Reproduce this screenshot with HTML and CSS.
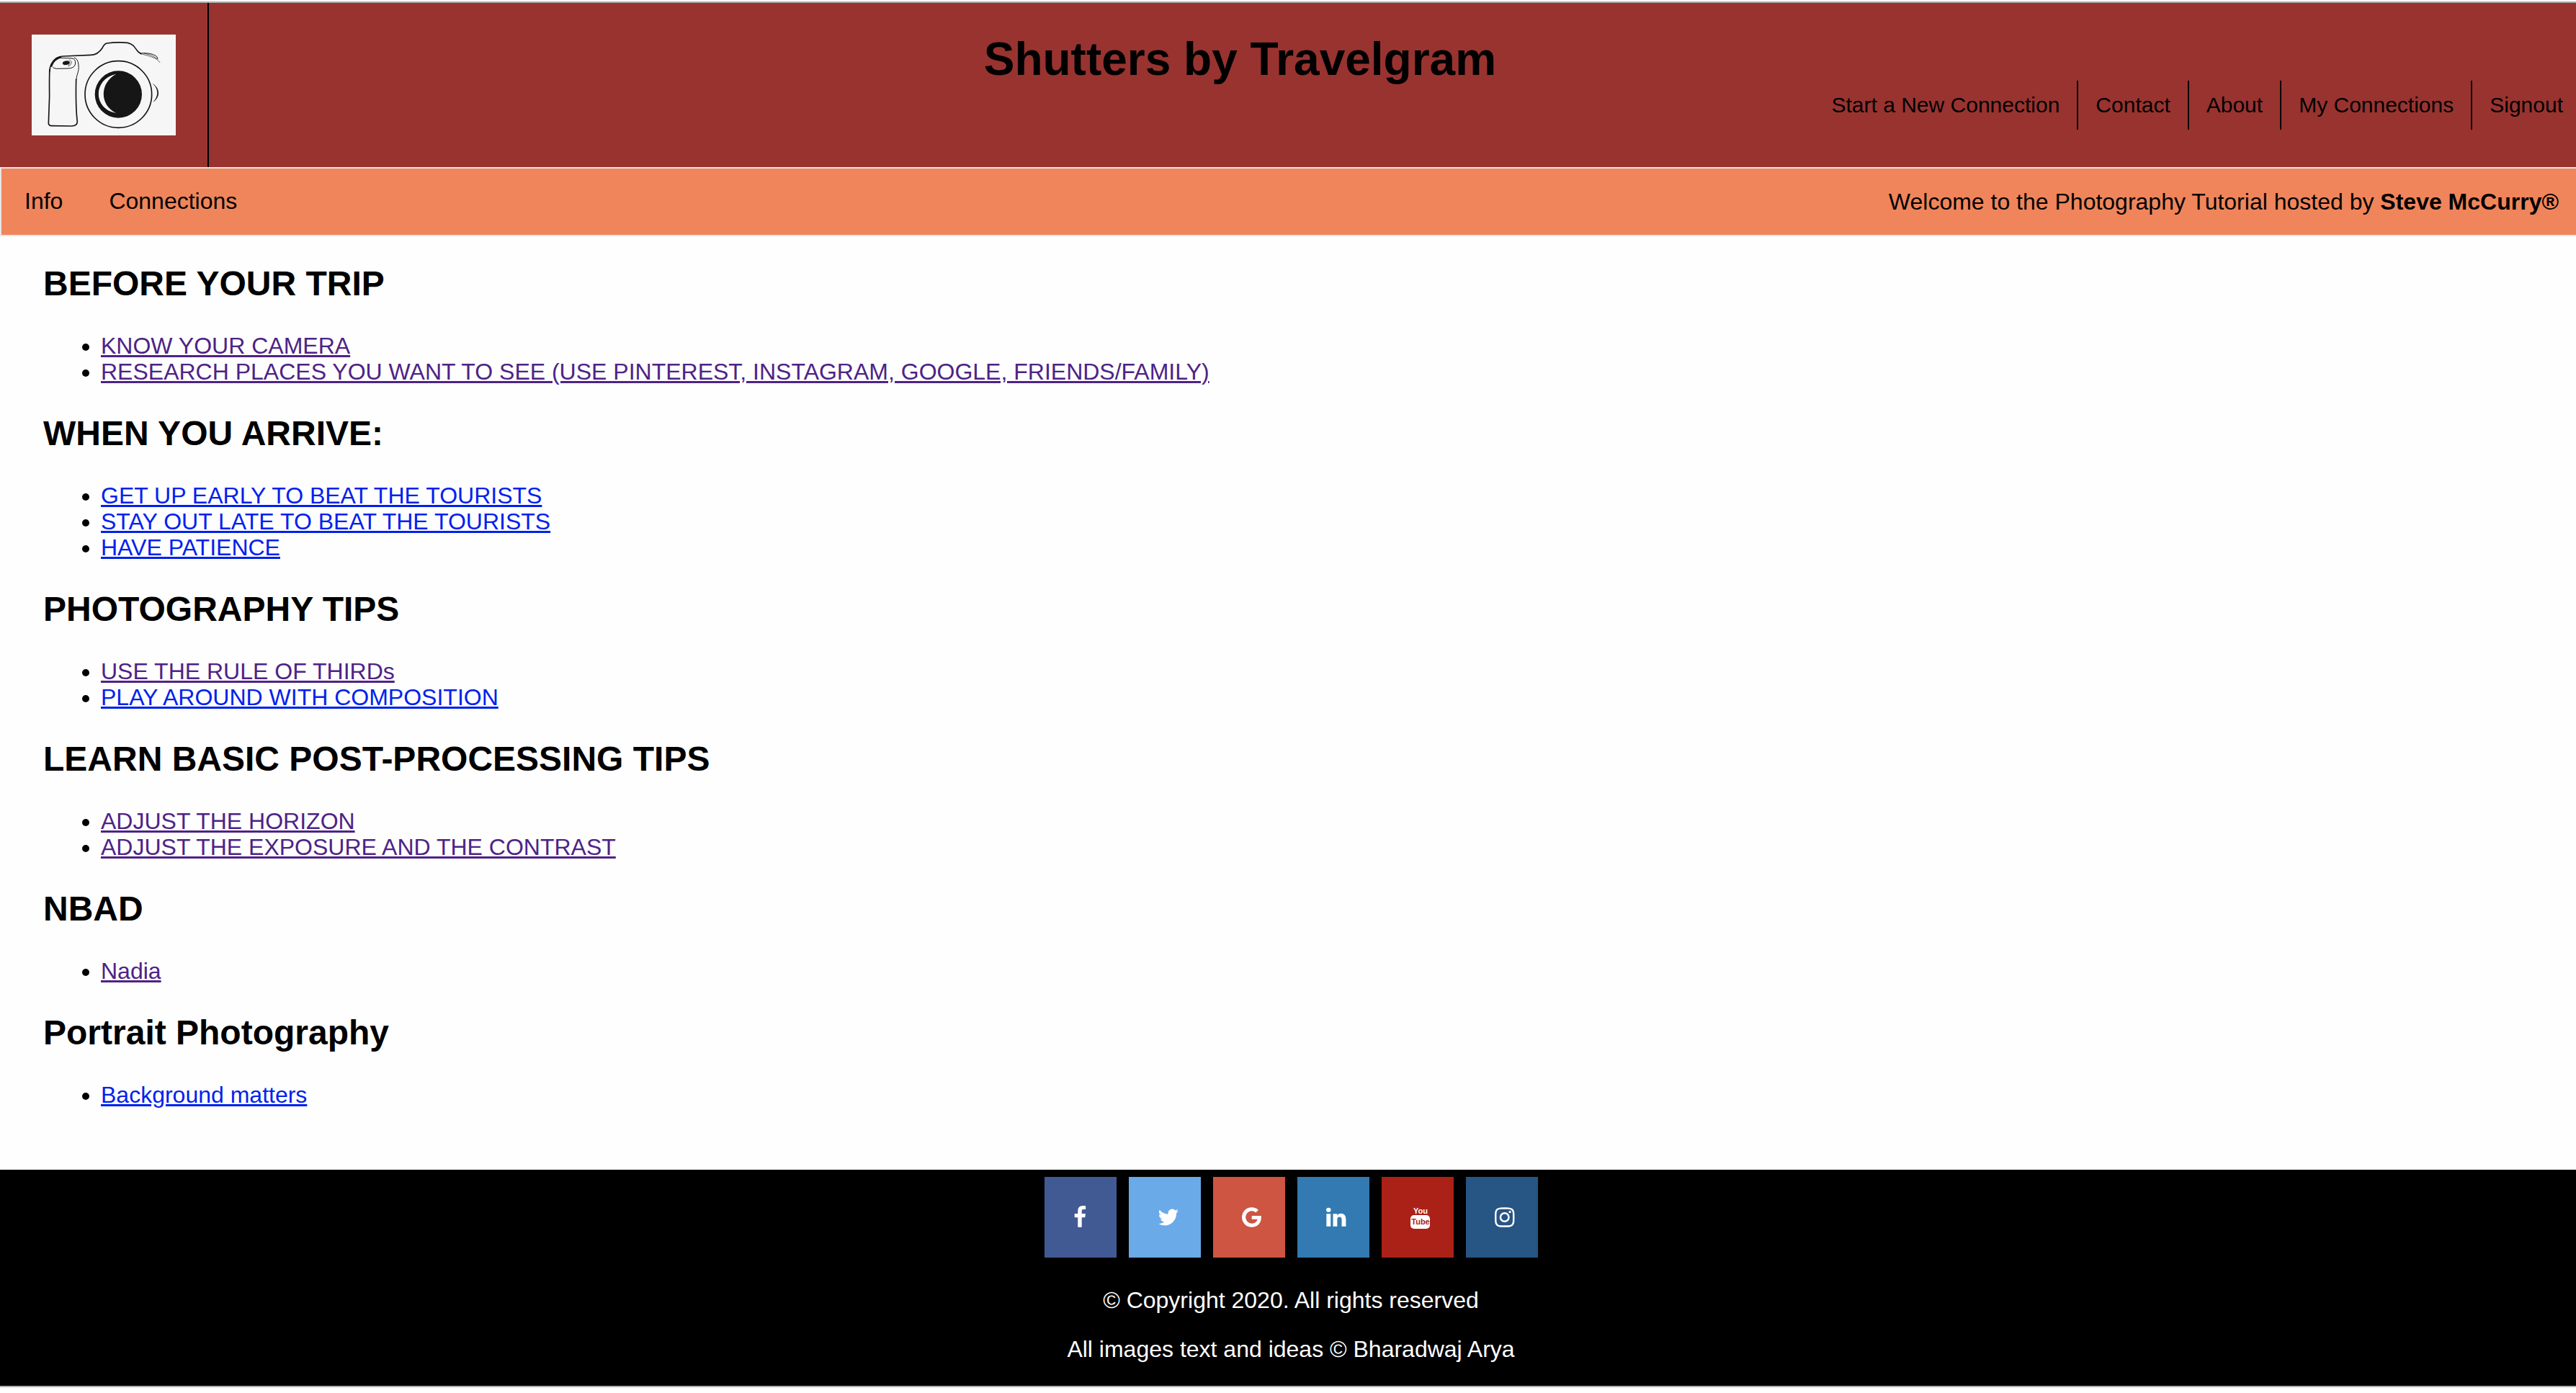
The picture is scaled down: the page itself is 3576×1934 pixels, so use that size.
FILE: index.html
```html
<!DOCTYPE html>
<html lang="en">
<head>
<meta charset="utf-8">
<title>Shutters by Travelgram</title>
<link rel="stylesheet" href="styles.css">
</head>
<body>
<header class="header">
  <a class="logo" href="#" aria-label="Home">
    <svg class="logo-image" viewBox="132 144 600 420" fill="none" stroke="#161616" stroke-linecap="round" aria-hidden="true">
      <path stroke-width="5" d="M206 300Q208 262 232 244Q244 235 268 234L380 229C400 228 416 215 426 200Q434 183 445 180Q490 174 530 178C560 184 562 202 574 214Q580 220 588 224"/>
      <path stroke-width="7" d="M214 275Q222 248 252 238"/>
      <path stroke-width="5" d="M207 290Q205 320 206 400L202 515Q204 524 214 524L298 525Q322 524 322 506C316 460 316 380 317 330"/>
      <path stroke-width="3" d="M317 335C320 305 330 300 327 270Q325 244 310 241"/>
      <path stroke-width="3" d="M244 241L300 243Q315 246 314 264Q312 284 285 285L235 286Q222 285 219 279"/>
      <path stroke-width="2" d="M290 249Q300 254 297 264Q294 274 284 276M288 254Q294 262 286 271"/>
      <ellipse cx="275" cy="262" rx="14" ry="8" fill="#161616" stroke-width="1" transform="rotate(-8 275 262)"/>
      <path stroke-width="3" d="M584 222Q625 218 648 232Q658 238 657 245"/>
      <path stroke-width="2" d="M588 224C610 232 650 236 666 260M600 222Q630 226 655 244"/>
      <circle cx="493" cy="393" r="139" stroke-width="5"/>
      <circle cx="493" cy="393" r="98" fill="#161616" stroke="none"/>
      <path fill="#f6f6f6" stroke="none" d="M484 308C386 328 386 454 484 471C414 438 414 345 484 308Z"/>
      <path fill="#161616" stroke="none" d="M638 350Q658 364 660 387Q658 410 640 423Q654 406 655 387Q654 366 638 350Z"/>
      <path stroke-width="2" d="M638 350Q658 364 659 387Q658 410 640 423"/>
    </svg>
  </a>
  <div class="header-main">
    <h1 class="title">Shutters by Travelgram</h1>
    <nav class="site-nav" aria-label="Main">
      <a href="#">Start a New Connection</a>
      <a href="#">Contact</a>
      <a href="#">About</a>
      <a href="#">My Connections</a>
      <a href="#">Signout</a>
    </nav>
  </div>
</header>
<div class="subnav">
  <nav class="subnav-links" aria-label="Section">
    <a href="#">Info</a>
    <a href="#">Connections</a>
  </nav>
  <p class="welcome">Welcome to the Photography Tutorial hosted by <strong>Steve McCurry®</strong></p>
</div>
<main class="content">
  <h2>BEFORE YOUR TRIP</h2>
  <ul>
    <li><a class="seen" href="#">KNOW YOUR CAMERA</a></li>
    <li><a class="seen" href="#">RESEARCH PLACES YOU WANT TO SEE (USE PINTEREST, INSTAGRAM, GOOGLE, FRIENDS/FAMILY)</a></li>
  </ul>
  <h2>WHEN YOU ARRIVE:</h2>
  <ul>
    <li><a href="#">GET UP EARLY TO BEAT THE TOURISTS</a></li>
    <li><a href="#">STAY OUT LATE TO BEAT THE TOURISTS</a></li>
    <li><a href="#">HAVE PATIENCE</a></li>
  </ul>
  <h2>PHOTOGRAPHY TIPS</h2>
  <ul>
    <li><a class="seen" href="#">USE THE RULE OF THIRDs</a></li>
    <li><a href="#">PLAY AROUND WITH COMPOSITION</a></li>
  </ul>
  <h2>LEARN BASIC POST-PROCESSING TIPS</h2>
  <ul>
    <li><a class="seen" href="#">ADJUST THE HORIZON</a></li>
    <li><a class="seen" href="#">ADJUST THE EXPOSURE AND THE CONTRAST</a></li>
  </ul>
  <h2>NBAD</h2>
  <ul>
    <li><a class="seen" href="#">Nadia</a></li>
  </ul>
  <h2>Portrait Photography</h2>
  <ul>
    <li><a href="#">Background matters</a></li>
  </ul>
</main>
<footer class="footer">
  <div class="social">
    <a class="facebook" href="#" aria-label="Facebook"><svg viewBox="384 0 1792 1792"><path d="M1343 12v264h-157q-86 0-116 36t-30 108v189h293l-39 296h-254v759h-306v-759h-255v-296h255v-218q0-186 104-288.500t277-102.500q147 0 228 12z"/></svg></a>
    <a class="twitter" href="#" aria-label="Twitter"><svg viewBox="64 0 1792 1792"><path d="M1684 408q-67 98-162 167 1 14 1 42 0 130-38 259.500t-115.500 248.500-184.500 210.500-258 146-323 54.500q-271 0-496-145 35 4 78 4 225 0 401-138-105-2-188-64.500t-114-159.500q33 5 61 5 43 0 85-11-112-23-185.500-111.500t-73.500-205.500v-4q68 38 146 41-66-44-105-115t-39-154q0-88 44-163 121 149 294.500 238.500t371.500 99.500q-8-38-8-74 0-134 94.500-228.500t228.500-94.500q140 0 236 102 109-21 205-78-37 115-142 178 93-10 186-50z"/></svg></a>
    <a class="google" href="#" aria-label="Google"><svg viewBox="128 0 1792 1792"><path d="M896 786h725q12 67 12 128 0 217-91 387.500t-259.500 266.500-386.500 96q-157 0-299-60.500t-245-163.500-163.500-245-60.500-299 60.500-299 163.500-245 245-163.500 299-60.500q300 0 515 201l-209 201q-123-119-306-119-129 0-238.500 65t-173.500 176.500-64 243.500 64 243.500 173.500 176.500 238.500 65q87 0 160-24t120-60 82-82 51.500-87 22.500-78h-436v-264z"/></svg></a>
    <a class="linkedin" href="#" aria-label="LinkedIn"><svg viewBox="128 0 1792 1792"><path d="M477 625v991h-330v-991h330zm21-306q1 73-50.500 122t-135.500 49h-2q-82 0-132-49t-50-122q0-74 51.500-122.500t134.500-48.500 133 48.500 51 122.500zm1166 729v568h-329v-530q0-105-40.500-164.500t-126.500-59.500q-63 0-105.500 34.500t-63.500 85.500q-11 30-11 81v553h-329q2-399 2-647t-1-296l-1-48h329v144h-2q20-32 41-56t56.500-52 87-43.500 114.500-15.500q171 0 275 113.500t104 332.500z"/></svg></a>
    <a class="youtube" href="#" aria-label="YouTube"><svg viewBox="0 0 32 32"><text x="14" y="11">You</text><rect y="13" width="27" height="19" rx="5"/><text class="tube" x="14" y="26">Tube</text></svg></a>
    <a class="instagram" href="#" aria-label="Instagram"><svg viewBox="128 0 1792 1792"><path d="M1152 896q0-106-75-181t-181-75-181 75-75 181 75 181 181 75 181-75 75-181zm138 0q0 164-115 279t-279 115-279-115-115-279 115-279 279-115 279 115 115 279zm108-410q0 38-27 65t-65 27-65-27-27-65 27-65 65-27 65 27 27 65zm-502-220q-7 0-76.500-.5t-105.500 0-96.500 3-103 10-71.500 18.500q-50 20-88 58t-58 88q-11 29-18.500 71.500t-10 103-3 96.500 0 105.500.5 76.500-.5 76.500 0 105.500 3 96.500 10 103 18.500 71.500q20 50 58 88t88 58q29 11 71.500 18.500t103 10 96.500 3 105.500 0 76.500-.5 76.500.5 105.500 0 96.500-3 103-10 71.500-18.500q50-20 88-58t58-88q11-29 18.500-71.500t10-103 3-96.500 0-105.500-.5-76.500.5-76.500 0-105.500-3-96.500-10-103-18.500-71.500q-20-50-58-88t-88-58q-29-11-71.500-18.500t-103-10-96.500-3-105.500 0-76.500.5zm768 630q0 229-5 317-10 208-124 322t-322 124q-88 5-317 5t-317-5q-208-10-322-124t-124-322q-5-88-5-317t5-317q10-208 124-322t322-124q88-5 317-5t317 5q208 10 322 124t124 322q5 88 5 317z"/></svg></a>
  </div>
  <p>© Copyright 2020. All rights reserved</p>
  <p>All images text and ideas © Bharadwaj Arya</p>
</footer>
</body>
</html>
```
FILE: styles.css
```css
* {
  box-sizing: border-box;
}

body {
  margin: 0;
  padding-top: 2px;
  background: #fefefe;
  color: #000;
  font-family: "Liberation Sans", Arial, sans-serif;
  font-size: 32px;
  line-height: 36px;
}

/* Header */
.header {
  display: flex;
  border-top: 2px solid #b0b0b0;
  background: #993330;
}

.logo {
  display: flex;
  padding: 44px;
  border-right: 2px solid #000;
}

.logo-image {
  width: 200px;
  height: 140px;
  background: #f6f6f6;
}

.header-main {
  flex: 1;
  padding-top: 48px;
}

.title {
  width: 87%;
  margin: 0;
  padding-left: 4px;
  font-size: 64px;
  line-height: 60px;
  text-align: center;
}

.site-nav {
  display: flex;
  justify-content: flex-end;
  font-size: 30px;
  line-height: 68px;
}

.site-nav a {
  padding: 0 24px;
  border-right: 2px solid #000;
  color: #000;
  text-decoration: none;
}

.site-nav a:last-child {
  padding-right: 18px;
  border-right: 0;
}

/* Orange bar under the header */
.subnav {
  display: flex;
  justify-content: space-between;
  padding: 0 24px 0 32px;
  border: 2px solid #e7e7e7;
  border-right: 0;
  background: #f0855b;
  line-height: 92px;
}

.subnav-links {
  display: flex;
  gap: 64px;
  line-height: 90px;
}

.subnav-links a {
  color: #000;
  text-decoration: none;
}

.welcome {
  margin: 0;
}

/* Tutorial lists */
.content {
  padding: 38px 60px 86px;
}

.content h2 {
  margin: 0 0 40px;
  font-size: 48px;
  line-height: 56px;
}

.content ul {
  margin: 0 0 40px;
  padding-left: 80px;
}

.content ul:last-child {
  margin-bottom: 0;
}

.content a {
  color: #0021ee;
}

.content .seen {
  color: #4e2386;
}

/* Footer */
.footer {
  padding: 10px 0 33px 8px;
  border-bottom: 2px solid #b0b0b0;
  background: #000;
  color: #fff;
  text-align: center;
}

.footer p {
  margin: 0 0 32px;
}

.footer p:last-child {
  margin-bottom: 0;
}

.social {
  display: flex;
  justify-content: center;
  gap: 17px;
  margin-bottom: 41px;
}

.social a {
  width: 100px;
  height: 112px;
  padding: 40px 0 0 40px;
  text-align: left;
}

.social svg {
  display: block;
  width: 32px;
  height: 32px;
  fill: #fff;
}

.social text {
  font-family: "Liberation Sans Narrow", "Liberation Sans", sans-serif;
  font-size: 11px;
  font-weight: bold;
  text-anchor: middle;
}

.social .tube {
  fill: #ab2117;
}

.facebook {
  background: #425a93;
}

.twitter {
  background: #6aaae8;
}

.google {
  background: #cd5542;
}

.linkedin {
  background: #327ab1;
}

.youtube {
  background: #ab2117;
}

.instagram {
  background: #275584;
}
```
